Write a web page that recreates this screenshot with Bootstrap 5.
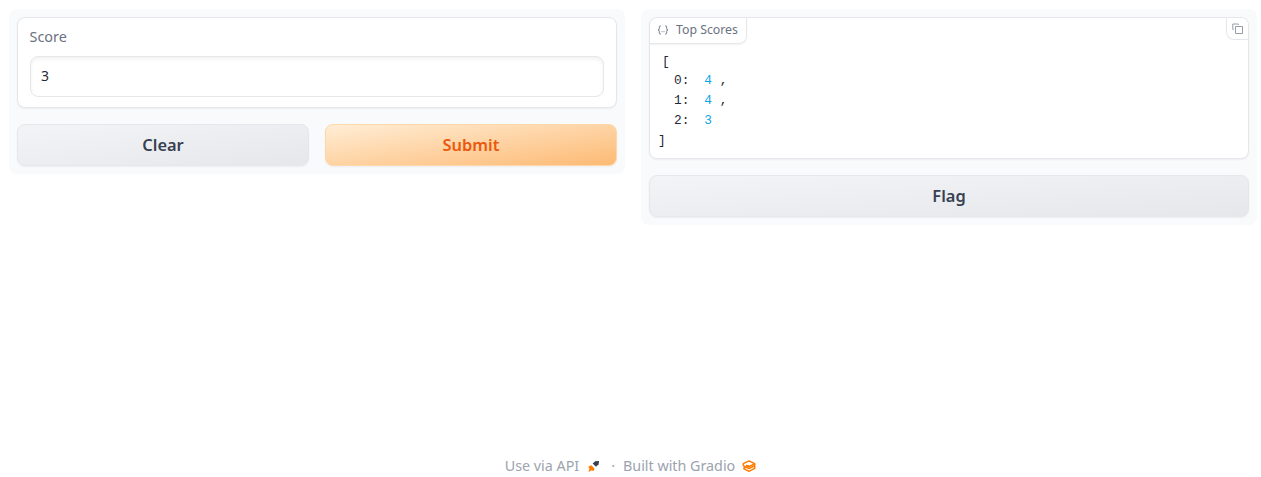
<!DOCTYPE html>
<html lang="en">
<head>
<meta charset="utf-8">
<meta name="viewport" content="width=device-width, initial-scale=1">
<title>Top Scores</title>
<link href="https://cdn.jsdelivr.net/npm/bootstrap@5.3.0/dist/css/bootstrap.min.css" rel="stylesheet">
<style>
body{font-family:"Noto Sans","Open Sans",sans-serif;color:#1f2937;background:#fff;height:477px;overflow:hidden}
main{padding:9px 4px 0 9px}
.panel{background:#f9fafb;border-radius:8px;padding:8px}
.block{background:#fff;border:1px solid #e5e7eb;border-radius:8px;box-shadow:0 1px 2px rgba(0,0,0,.05)}
.score-block{height:91px;padding:9px 12px 10px}
.score-label{font-size:14.4px;line-height:20px;color:#6b7280;margin:0 0 9px -.5px}
.score-input{height:41px;border:1px solid #e5e7eb;border-radius:8px;padding:0 10px 2px;font-size:14px;line-height:20px;color:#1f2937;box-shadow:inset 0 2px 4px rgba(0,0,0,.06)}
.action{height:42px;padding:0;border:1px solid #e5e7eb;border-radius:8px;font-size:16.4px;font-weight:600;line-height:24px;color:#374151;background:linear-gradient(to bottom right,#f3f4f6,#e5e7eb);box-shadow:0 1px 2px rgba(0,0,0,.05)}
.action.primary{border-color:#fed7aa;color:#ea580c;background:linear-gradient(to bottom right,#ffedd5,#fdba74)}
.json-block{height:142px}
.tag{height:26px;padding:0 8px 1px 7px;font-size:12.3px;line-height:18px;color:#6b7280;border:solid #e5e7eb;border-width:0 1px 1px 0;border-radius:7px 0 8px 0;box-shadow:0 1px 2px rgba(0,0,0,.05)}
.tag svg{margin-right:7px}
.copy{width:22px;height:22px;padding:0;background:#fff;color:#8b929e;border:solid #e5e7eb;border-width:0 0 1px 1px;border-radius:0 7px 0 8px}
.json{font:12.8px/20px "Liberation Mono",monospace;padding:7px 0 0 8px;white-space:pre}
.json div:first-child{padding-top:1px;height:20px}
.num{color:#0ea5e9;margin-left:15px}
footer{height:22px;padding-bottom:1px;font-size:14.3px;line-height:20px;color:#9ca3af}
.rocket{margin:0 11px 0 8px}
.dot{margin-right:8px}
.logo{margin-left:7px}
</style>
</head>
<body class="d-flex flex-column">
<main class="d-flex align-items-start gap-3 flex-grow-1">
  <section class="panel d-flex flex-column gap-3 flex-fill w-50">
    <div class="block score-block">
      <label class="score-label d-block" for="score">Score</label>
      <input id="score" class="score-input d-block w-100" value="3">
    </div>
    <div class="d-flex gap-3">
      <button class="btn action flex-fill w-50">Clear</button>
      <button class="btn action primary flex-fill w-50">Submit</button>
    </div>
  </section>
  <section class="panel d-flex flex-column gap-3 flex-fill w-50">
    <div class="block json-block">
      <div class="d-flex justify-content-between align-items-start">
        <div class="tag d-flex align-items-center"><svg width="12" height="10" viewBox="0 0 12 10" fill="none" stroke="currentColor" stroke-width=".9"><path d="M4 1H3.300Q2.300 1 2.300 2V3.800Q2.300 5 1 5 2.300 5 2.300 6.200V8Q2.300 9 3.300 9H4M8 1h.7Q9.700 1 9.700 2V3.800Q9.700 5 11 5 9.700 5 9.700 6.200V8Q9.700 9 8.700 9H8"/><path d="M4.500 6.700h1M6.500 6.700h1"/></svg>Top Scores</div>
        <button class="copy d-flex align-items-center justify-content-center" aria-label="Copy"><svg width="12" height="12" viewBox="0 0 12 12" fill="none" stroke="currentColor" stroke-width=".9"><path d="M3.500 3.500h7v7h-7z"/><path d="M1.500 6.500H.8V1h5.500v.9"/></svg></button>
      </div>
      <div class="json"><div class="ps-1">[</div><div class="ps-3">0:<span class="num">4</span> ,</div><div class="ps-3">1:<span class="num">4</span> ,</div><div class="ps-3">2:<span class="num">3</span></div><div>]</div></div>
    </div>
    <button class="btn action w-100">Flag</button>
  </section>
</main>
<footer class="d-flex justify-content-center align-items-center">
  <span>Use via API</span>
  <svg class="rocket" width="13" height="14" viewBox="0 0 14 14"><path d="M13 1.700 12.500 5.200 9.700 7.900 6.100 4.400 8.800 2z" fill="#374151"/><path d="m4.700 6.200 3.300 3.400-1 3.100-1.800-1.100-3.600 1.800 1-3.500L1.300 7.700z" fill="#ff7c00"/></svg>
  <span class="dot">·</span>
  <span>Built with Gradio</span>
  <svg class="logo" width="14" height="14" viewBox="0 0 14 14" fill="none" stroke="#ff7c00" stroke-width="1.500" stroke-linejoin="round"><path d="M1.300 6.700V4.700L7 1.900l5.700 2.800L7 7.600 4.200 6.200M1.300 6.700 4.400 8.200 7 9.500l5.700-2.800V4.700M1.300 9.400 7 6.600M1.300 9.400 7 12.300l5.700-2.900V6.700"/></svg>
</footer>
<script src="https://cdn.jsdelivr.net/npm/bootstrap@5.3.0/dist/js/bootstrap.bundle.min.js"></script>
</body>
</html>
